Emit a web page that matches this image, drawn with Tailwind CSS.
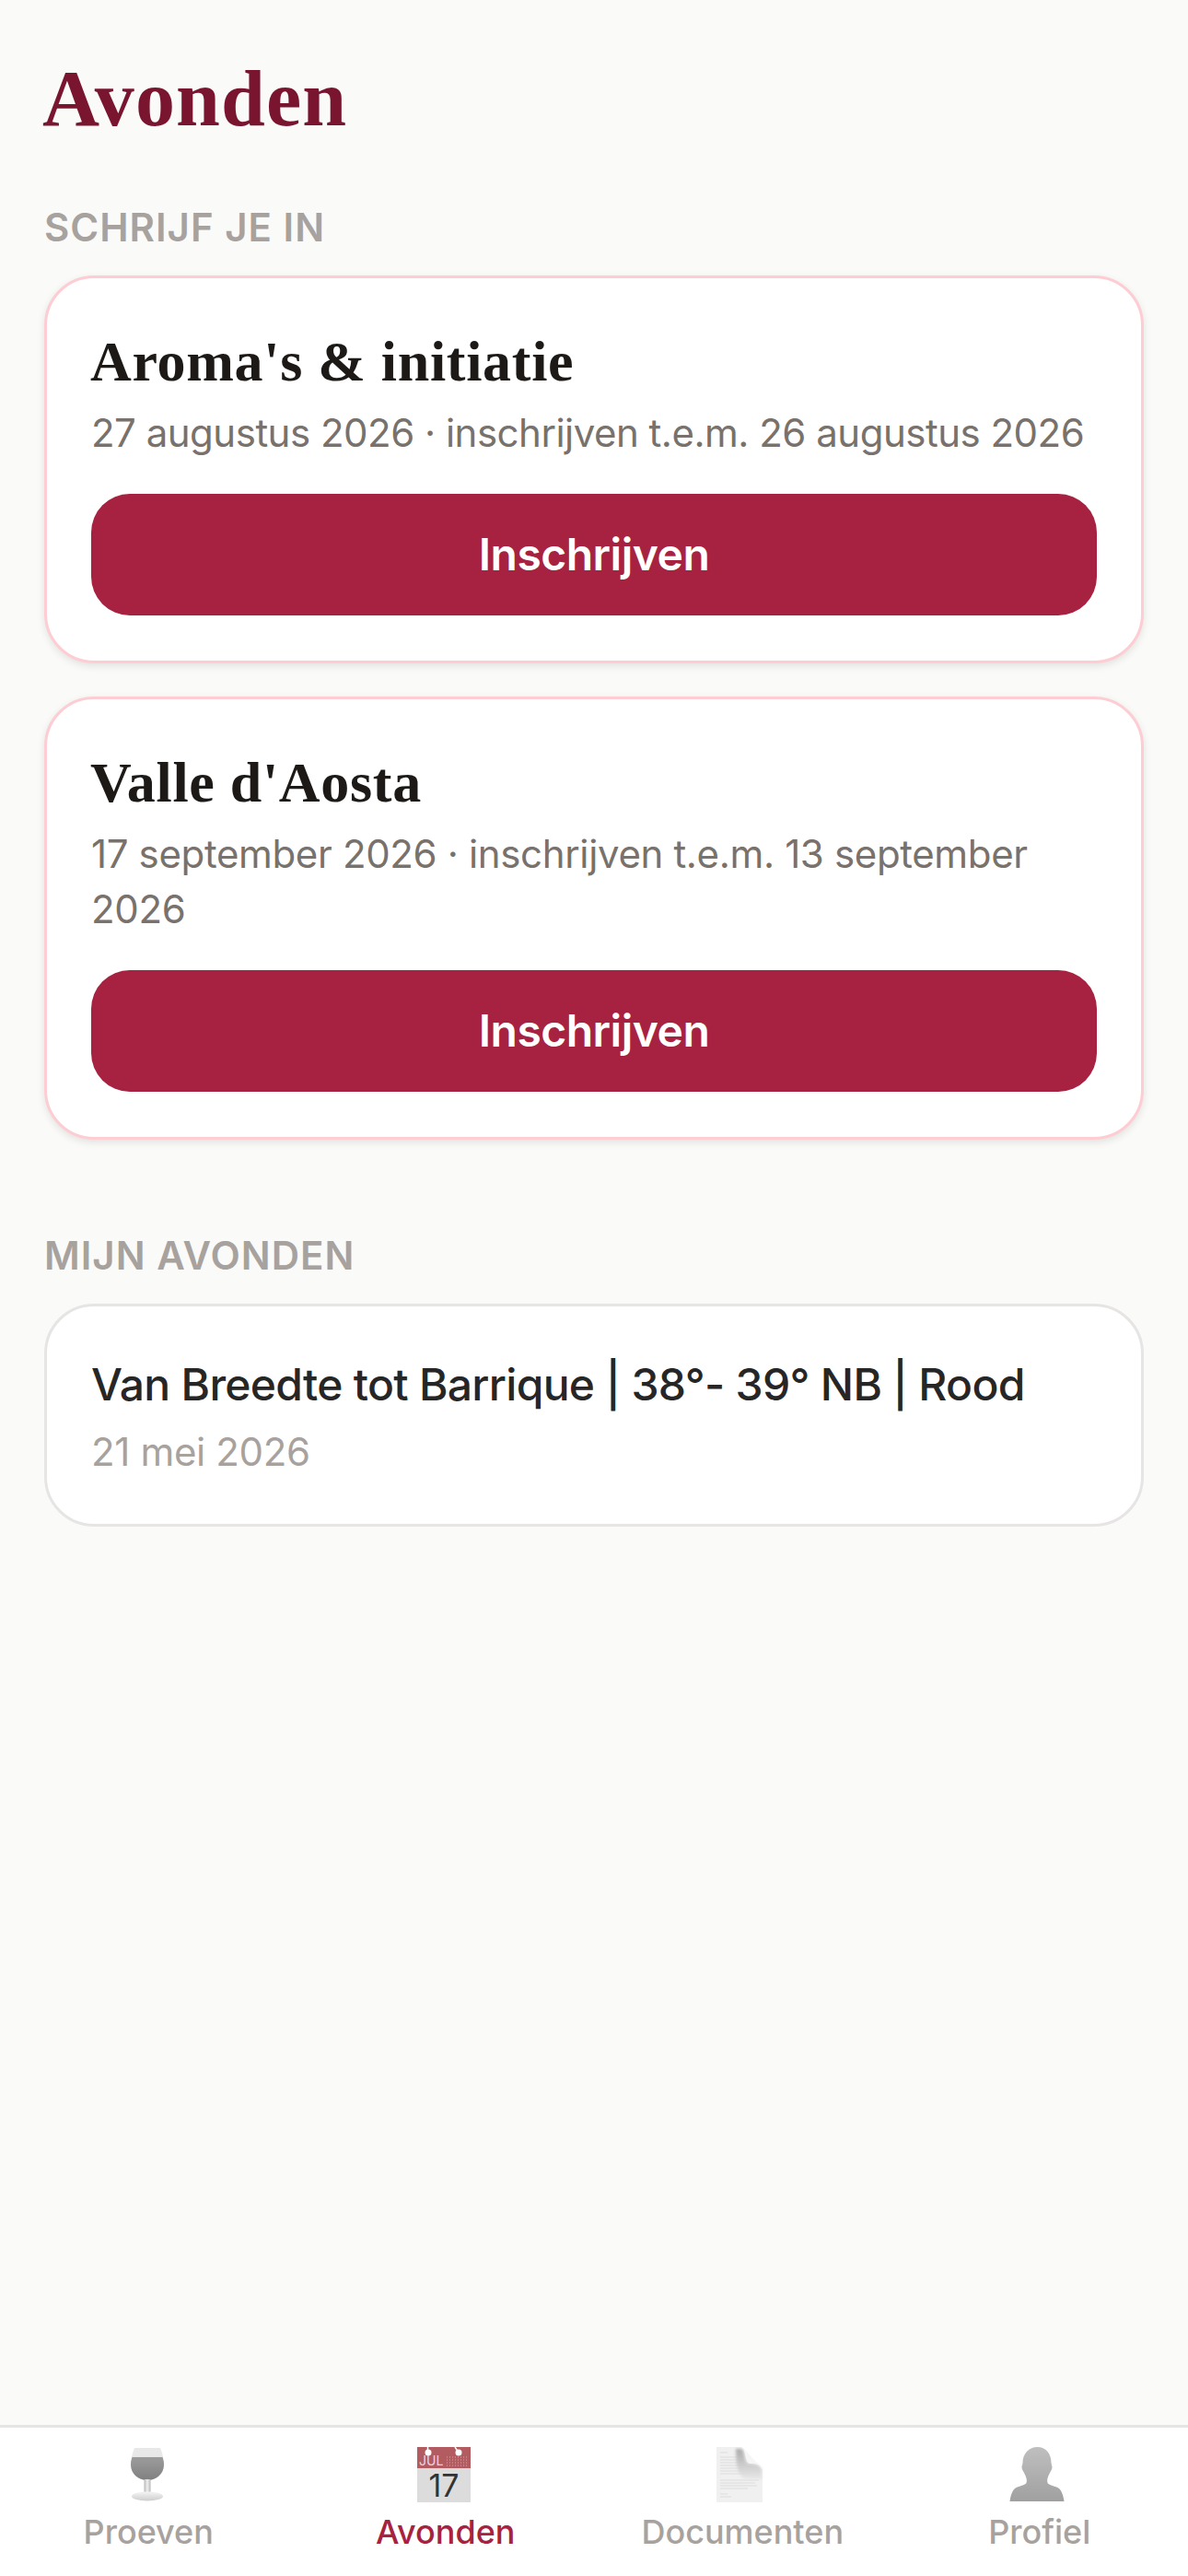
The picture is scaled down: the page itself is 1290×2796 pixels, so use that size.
<!DOCTYPE html>
<html lang="nl">
<head>
    <meta charset="UTF-8">
    <meta name="viewport" content="width=device-width, initial-scale=1.0">
    <title>Avonden</title>
    <script src="https://cdn.jsdelivr.net/npm/@tailwindcss/browser@4"></script>
</head>
<body class="bg-[#fafaf9] font-[Inter,sans-serif]">
    <div class="flex flex-col h-[2796px]">
        <main class="flex-1 px-12 pt-[62px]">
            <h1 class="-ml-[2px] font-['Liberation_Serif',serif] font-bold text-[86px] tracking-[1.1px] leading-[90px] text-[#7a1530]">Avonden</h1>

            <!-- Open evenings -->
            <h2 class="mt-[71px] text-[42px] leading-[48px] font-semibold uppercase tracking-[1px] text-[#a8a29e]">Schrijf je in</h2>
            <div class="mt-[28px] flex flex-col gap-[36px]">
                <div class="bg-white rounded-[54px] border-[3px] border-[#fecdd3] px-12 pt-[57px] pb-[49px] shadow-[0_3px_9px_rgba(0,0,0,0.1)]">
                    <h3 class="-ml-[1px] font-['Liberation_Serif',serif] font-bold text-[62px] tracking-[0.7px] leading-[66px] text-[#1c1917]">Aroma's &amp; initiatie</h3>
                    <p class="mt-[15px] text-[42px] leading-[60px] tracking-[-0.5px] text-[#78716c]">27 augustus 2026 · inschrijven t.e.m. 26 augustus 2026</p>
                    <button class="mt-[36px] w-full h-[132px] rounded-[42px] bg-[#a72140] text-white text-[48px] tracking-[-0.5px] font-semibold">Inschrijven</button>
                </div>
                <div class="bg-white rounded-[54px] border-[3px] border-[#fecdd3] px-12 pt-[57px] pb-[49px] shadow-[0_3px_9px_rgba(0,0,0,0.1)]">
                    <h3 class="-ml-[1px] font-['Liberation_Serif',serif] font-bold text-[62px] tracking-[0.7px] leading-[66px] text-[#1c1917]">Valle d'Aosta</h3>
                    <p class="mt-[15px] text-[42px] leading-[60px] tracking-[-0.35px] text-[#78716c]">17 september 2026 · inschrijven t.e.m. 13 september 2026</p>
                    <button class="mt-[36px] w-full h-[132px] rounded-[42px] bg-[#a72140] text-white text-[48px] tracking-[-0.5px] font-semibold">Inschrijven</button>
                </div>
            </div>

            <!-- Past evenings -->
            <h2 class="mt-[102px] text-[42px] leading-[48px] font-semibold uppercase tracking-[1px] text-[#a8a29e]">Mijn avonden</h2>
            <div class="mt-[28px] bg-white rounded-[54px] border-[3px] border-[#e7e5e4] px-12 pt-[52px] pb-[48px]">
                <p class="text-[48px] leading-[66px] tracking-[-0.7px] font-medium text-[#262626]">Van Breedte tot Barrique | 38°- 39° NB | Rood</p>
                <p class="mt-[10px] text-[42px] leading-[60px] tracking-[-0.35px] text-[#a8a29e]">21 mei 2026</p>
            </div>
        </main>

        <!-- Tab bar -->
        <nav class="h-[164px] bg-white border-t-[3px] border-[#e7e5e4] grid grid-cols-4">
            <a class="flex flex-col items-center pt-[21px]">
                <svg class="w-[66px] h-[60px]" viewBox="0 0 66 60">
                    <defs>
                        <linearGradient id="wine" x1="0" y1="0" x2="0" y2="1"><stop offset="0" stop-color="#9c9c9c"/><stop offset="1" stop-color="#808080"/></linearGradient>
                        <linearGradient id="foot" x1="0" y1="0" x2="0" y2="1"><stop offset="0" stop-color="#f4f4f4"/><stop offset="1" stop-color="#cdcdcd"/></linearGradient>
                        <linearGradient id="stem" x1="0" y1="0" x2="1" y2="0"><stop offset="0" stop-color="#b5b5b5"/><stop offset=".5" stop-color="#f0f0f0"/><stop offset="1" stop-color="#b5b5b5"/></linearGradient>
                    </defs>
                    <path d="M18 1h28c2 5 4 11 4 18 0 10-8 17-18 17s-18-7-18-17c0-7 2-13 4-18z" fill="#e8e8e8"/>
                    <path d="M15.500 11h33c1 3 1.500 5.500 1.500 8 0 10-8 17-18 17s-18-7-18-17c0-2.500.5-5 1.500-8z" fill="url(#wine)"/>
                    <rect x="28.500" y="35" width="7" height="15" fill="url(#stem)"/>
                    <ellipse cx="32" cy="53.500" rx="17" ry="5" fill="url(#foot)"/>
                </svg>
                <span class="mt-[10px] text-[36px] leading-[44px] font-medium text-[#a8a29e]">Proeven</span>
            </a>
            <a class="flex flex-col items-center pt-[21px]">
                <svg class="w-[66px] h-[60px]" viewBox="0 0 66 60">
                    <rect x="2" y="0" width="58" height="60" fill="#dcdcdc"/>
                    <rect x="2" y="0" width="58" height="23" fill="#b25b60"/>
                    <path d="M13.500 0v6M43 0l4 6" stroke="#fff" stroke-width="1.500"/>
                    <circle cx="14" cy="6" r="3.500" fill="#fff"/>
                    <circle cx="47" cy="6" r="3.500" fill="#fff"/>
                    <text x="4" y="20" font-family="Inter" font-size="14" fill="#ecd5d6">JUL</text>
                    <path d="M34 11h24M34 14h24M34 17h24M34 20h24" stroke="#d9a3a6" stroke-width="1" stroke-dasharray="1 2"/>
                    <text x="31" y="54" text-anchor="middle" font-family="Inter" font-size="34" fill="#333">17</text>
                </svg>
                <span class="mt-[10px] text-[36px] leading-[44px] font-medium text-[#a72140]">Avonden</span>
            </a>
            <a class="flex flex-col items-center pt-[21px]">
                <svg class="w-[66px] h-[60px]" viewBox="0 0 66 60">
                    <defs>
                        <linearGradient id="curl" x1="0" y1="0" x2="0" y2="1"><stop offset="0" stop-color="#a5a5a5"/><stop offset="1" stop-color="#e8e8e8"/></linearGradient>
                        <filter id="soft"><feGaussianBlur stdDeviation="1.500"/></filter>
                    </defs>
                    <path d="M5 0h27l23 24v36H5z" fill="#f0f0f0"/>
                    <g stroke="#dcdcdc" stroke-width="1">
                        <path d="M9 6h8M9 11h20M9 14h20M9 17h22M9 20h22M9 23h24M9 26h24M9 29h32M9 36h42M9 39h38M9 42h40M9 45h30M9 51h8M9 54h12"/>
                    </g>
                    <path d="M26 2h6c4 2 3 16 8 16 5 0 13 1 14 7v10H38c-8-2-12-10-12-33z" fill="url(#curl)" opacity=".9" filter="url(#soft)"/>
                    <path d="M33 0l22 24c-1-5-8-6-13-6-6 0-5-14-9-18z" fill="#f6f6f6"/>
                </svg>
                <span class="mt-[10px] text-[36px] leading-[44px] font-medium text-[#a8a29e]">Documenten</span>
            </a>
            <a class="flex flex-col items-center pt-[21px]">
                <svg class="w-[66px] h-[60px]" viewBox="0 0 66 60">
                    <defs>
                        <linearGradient id="person" x1="0" y1="0" x2="0" y2="1"><stop offset="0" stop-color="#bfbfbf"/><stop offset="1" stop-color="#a0a0a0"/></linearGradient>
                    </defs>
                    <path d="M30 0c9 0 15 7 15 17 0 2 1 3 1 5s-2 5-3 7c-2 4-3 7-2 10 1 2 6 3 11 5 4 2 6 8 7 15H0c1-7 3-13 7-15 5-2 10-3 11-5 1-3 0-6-2-10-1-2-3-5-3-7s1-3 1-5C14 7 21 0 30 0z" transform="translate(.5 0)" fill="url(#person)"/>
                </svg>
                <span class="mt-[10px] text-[36px] leading-[44px] font-medium text-[#a8a29e]">Profiel</span>
            </a>
        </nav>
    </div>
</body>
</html>
